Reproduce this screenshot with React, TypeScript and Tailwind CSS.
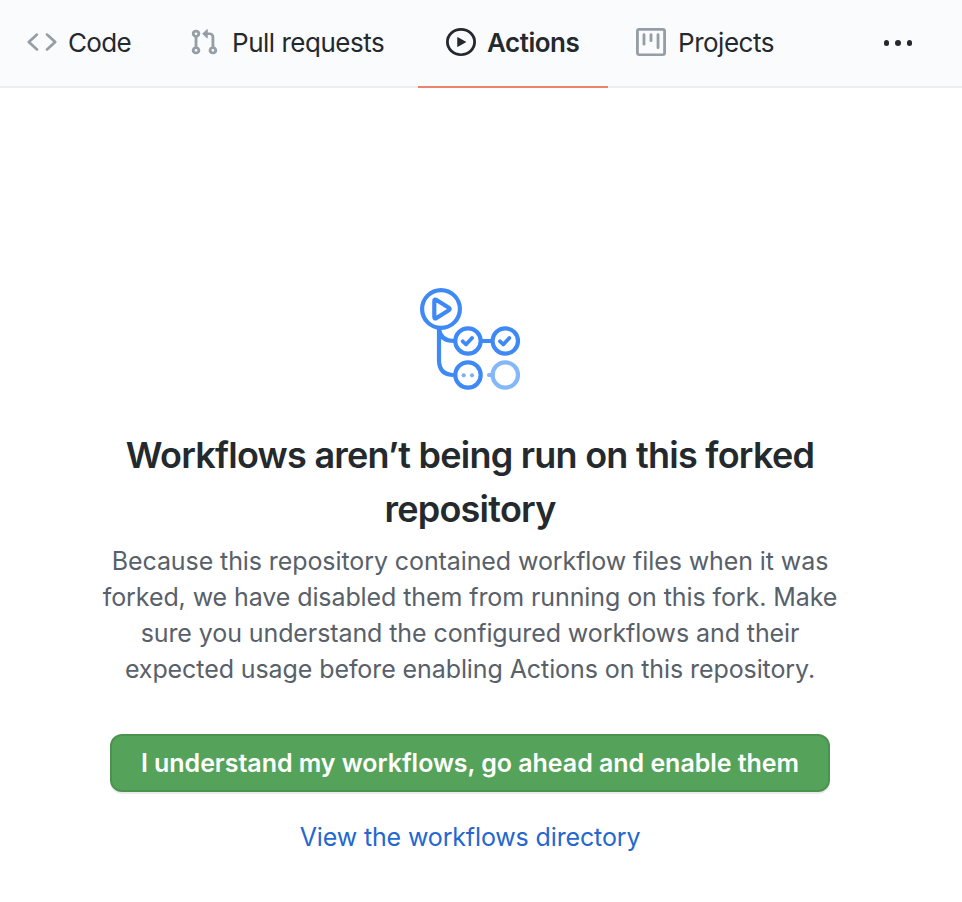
import React from 'react';

function CodeIcon() {
  return (
    <svg className="h-7 w-[30px] shrink-0 text-[#959da5]" viewBox="0 0 16 16" preserveAspectRatio="none" fill="currentColor">
      <path fillRule="evenodd" d="M4.72 3.22a.75.75 0 011.06 1.06L2.06 8l3.72 3.72a.75.75 0 11-1.06 1.06L.47 8.53a.75.75 0 010-1.06l4.25-4.25zm6.56 0a.75.75 0 10-1.06 1.06L13.94 8l-3.72 3.72a.75.75 0 101.06 1.06l4.25-4.25a.75.75 0 000-1.06l-4.25-4.25z" />
    </svg>
  );
}

function PullIcon() {
  return (
    <svg className="h-7 w-[30px] shrink-0 text-[#959da5]" viewBox="0 0 16 16" preserveAspectRatio="none" fill="currentColor">
      <path fillRule="evenodd" d="M7.177 3.073L9.573.677A.25.25 0 0110 .854v4.792a.25.25 0 01-.427.177L7.177 3.427a.25.25 0 010-.354zM3.75 2.5a.75.75 0 100 1.5.75.75 0 000-1.5zm-2.25.75a2.25 2.25 0 113 2.122v5.256a2.251 2.251 0 11-1.5 0V5.372A2.25 2.25 0 011.5 3.25zM11 2.5h-1V4h1a1 1 0 011 1v5.628a2.251 2.251 0 101.5 0V5A2.5 2.5 0 0011 2.5zm1 10.25a.75.75 0 111.5 0 .75.75 0 01-1.5 0zM3.75 12a.75.75 0 100 1.5.75.75 0 000-1.5z" />
    </svg>
  );
}

function PlayIcon() {
  return (
    <svg className="h-7 w-[30px] shrink-0 text-[#24292e]" viewBox="0 0 16 16" preserveAspectRatio="none" fill="currentColor">
      <path fillRule="evenodd" d="M1.5 8a6.5 6.5 0 1113 0 6.5 6.5 0 01-13 0zM8 0a8 8 0 100 16A8 8 0 008 0zM6.379 5.227A.25.25 0 006 5.442v5.117a.25.25 0 00.379.214l4.264-2.559a.25.25 0 000-.428L6.379 5.227z" />
    </svg>
  );
}

function ProjectIcon() {
  return (
    <svg className="h-7 w-[30px] shrink-0 text-[#959da5]" viewBox="0 0 16 16" preserveAspectRatio="none" fill="currentColor">
      <path fillRule="evenodd" d="M1.75 0A1.75 1.75 0 000 1.75v12.5C0 15.216.784 16 1.75 16h12.5A1.75 1.75 0 0016 14.25V1.75A1.75 1.75 0 0014.25 0H1.75zM1.5 1.75a.25.25 0 01.25-.25h12.5a.25.25 0 01.25.25v12.5a.25.25 0 01-.25.25H1.75a.25.25 0 01-.25-.25V1.75zM11.75 3a.75.75 0 00-.75.75v7.5a.75.75 0 001.5 0v-7.5a.75.75 0 00-.75-.75zm-8.25.75a.75.75 0 011.5 0v5.5a.75.75 0 01-1.5 0v-5.5zM8 3a.75.75 0 00-.75.75v3.5a.75.75 0 001.5 0v-3.5A.75.75 0 008 3z" />
    </svg>
  );
}

function WorkflowArt() {
  return (
    <svg className="h-[104px] w-[104px]" viewBox="418 286 104 104" fill="none" stroke="#3f89f7" strokeWidth="4.200">
      <path d="M439 329v31q0 15 15 15M439 329C440 337 445 341 454 341M482 341h9" />
      <circle cx="441" cy="309" r="18.900" fill="white" />
      <path d="M434.300 301.200v15.600q0 2.500 2.200 1.300l12.300-7.800q1.800-1.300 0-2.600l-12.300-7.800q-2.200-1.200-2.200 1.300z" strokeLinejoin="round" />
      <circle cx="468" cy="341" r="12.700" />
      <circle cx="505.300" cy="341" r="12.700" />
      <circle cx="468" cy="375" r="12.700" />
      <path d="M462.700 341.300l3.300 3.200 6-6.500M500 341.300l3.300 3.200 6-6.500" strokeLinecap="round" strokeLinejoin="round" strokeWidth="3.800" />
      <g stroke="#85b7fb">
        <circle cx="505.300" cy="375" r="12.700" />
        <path d="M489 375h4" strokeLinecap="round" />
      </g>
      <g fill="#79b0fb" stroke="none">
        <circle cx="463.700" cy="375.300" r="2.100" />
        <circle cx="472" cy="375.300" r="2.100" />
      </g>
    </svg>
  );
}

export default function App() {
  return (
    <div className="h-[902px] w-[962px] overflow-hidden bg-white font-['Inter',sans-serif] text-[#24292e]">
      <nav className="flex h-[88px] border-b-2 border-[#eeeeef] bg-[#fafbfd] text-[26px] leading-[39px] tracking-[-0.48px]">
        <a className="flex h-[84px] w-[162px] items-center gap-[11px] pl-[27px]"><CodeIcon /><span className="pt-px tracking-[-0.7px]">Code</span></a>
        <a className="flex h-[84px] w-[256px] items-center gap-[13px] pl-[27px]"><PullIcon /><span className="pt-px">Pull requests</span></a>
        <a className="flex h-[88px] w-[190px] items-center gap-[11px] border-b-2 border-[#ec836d] pb-0.5 pl-7 font-semibold"><PlayIcon /><span className="pt-px">Actions</span></a>
        <a className="flex h-[84px] w-[224px] items-center gap-3 pl-7"><ProjectIcon /><span className="pt-px">Projects</span></a>
        <div className="flex h-[86px] w-[130px] items-center justify-center gap-1.5 pl-0.5">
          <i className="size-[5.400px] rounded-full bg-[#24292e]" />
          <i className="size-[5.400px] rounded-full bg-[#24292e]" />
          <i className="size-[5.400px] rounded-full bg-[#24292e]" />
        </div>
      </nav>
      <main className="flex w-[940px] flex-col items-center pt-[198px] text-center">
        <WorkflowArt />
        <h1 className="mt-[38px] text-[36px] leading-[54px] font-semibold tracking-[-0.75px]">Workflows aren’t being run on this forked<br />repository</h1>
        <p className="mt-[7px] text-[25px] leading-9 tracking-[-0.09px] whitespace-nowrap text-[#586069]">Because this repository contained workflow files when it was<br />forked, we have disabled them from running on this fork. Make<br />sure you understand the configured workflows and their<br />expected usage before enabling Actions on this repository.</p>
        <button className="mt-[47px] h-[58px] w-[720px] rounded-xl border-2 border-[#4a934f] bg-[#55a35a] pt-0.5 text-[25px] font-semibold tracking-[-0.04px] text-white shadow-[0_2px_0_rgba(27,31,35,0.09)]">I understand my workflows, go ahead and enable them</button>
        <a className="mt-[27px] text-[25px] leading-9 tracking-[-0.14px] text-[#2467d1]">View the workflows directory</a>
      </main>
    </div>
  );
}
